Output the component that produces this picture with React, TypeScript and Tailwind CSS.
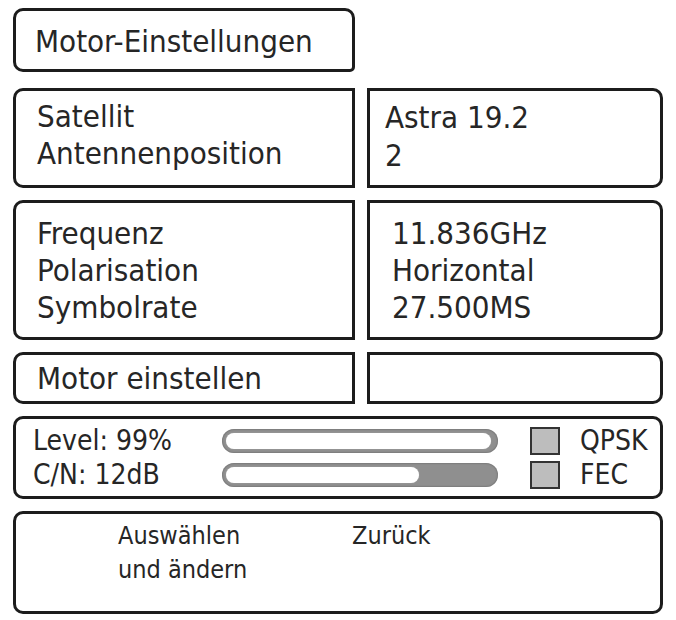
import React from "react";

const font = "font-['DejaVu_Sans_Condensed','DejaVu_Sans',sans-serif] font-stretch-semi-condensed";

const signal = [
  { label: "Level: 99%", value: 99, flag: "QPSK" },
  { label: "C/N: 12dB", value: 72, flag: "FEC" },
];

function Bar({ value }: { value: number }) {
  return (
    <div className="h-[24px] w-[276px] rounded-full bg-[#8f8f8f] p-[4px] shadow-[inset_0_0_2px_#555]">
      <div
        className="h-full rounded-full bg-white shadow-[0_0_1px_#bbb]"
        style={{ width: `${value}%` }}
      />
    </div>
  );
}

export default function App() {
  return (
    <div className={`min-h-[620px] w-[676px] bg-white text-[#262626] ${font}`}>
      <div className="flex flex-col gap-[12px] px-[13px] pt-[8px]">
        <div className="mb-[4px] flex h-[64px] w-[342px] items-center rounded-[10px] rounded-br-[5px] border-[3px] border-[#1c1c1c] pl-[19px] pt-[3px] text-[31px]">
          Motor-Einstellungen
        </div>

        <div className="flex gap-[12px]">
          <div className="h-[100px] w-[342px] rounded-l-[10px] border-[3px] border-[#1c1c1c] pl-[21px] pt-[7px] text-[31px] leading-[37px]">
            <div>Satellit</div>
            <div>Antennenposition</div>
          </div>
          <div className="h-[100px] flex-1 rounded-r-[10px] border-[3px] border-[#1c1c1c] pl-[15px] pt-[7px] text-[31px] leading-[38px]">
            <div>Astra 19.2</div>
            <div>2</div>
          </div>
        </div>

        <div className="flex gap-[12px]">
          <div className="h-[140px] w-[342px] rounded-l-[10px] border-[3px] border-[#1c1c1c] pl-[21px] pt-[12px] text-[31px] leading-[37px]">
            <div>Frequenz</div>
            <div>Polarisation</div>
            <div>Symbolrate</div>
          </div>
          <div className="h-[140px] flex-1 rounded-r-[10px] border-[3px] border-[#1c1c1c] pl-[22px] pt-[12px] text-[31px] leading-[37px]">
            <div>11.836GHz</div>
            <div>Horizontal</div>
            <div>27.500MS</div>
          </div>
        </div>

        <div className="flex gap-[12px]">
          <div className="flex h-[52px] w-[342px] items-center rounded-l-[10px] border-[3px] border-[#1c1c1c] pl-[21px] text-[31px]">
            Motor einstellen
          </div>
          <div className="h-[52px] flex-1 rounded-r-[10px] border-[3px] border-[#1c1c1c]" />
        </div>

        <div className="flex h-[83px] flex-col justify-center rounded-[10px] border-[3px] border-[#1c1c1c] pl-[17px] text-[28px]">
          {signal.map((s) => (
            <div key={s.flag} className="flex h-[34px] items-center">
              <div className="w-[189px]">{s.label}</div>
              <Bar value={s.value} />
              <div className="ml-[32px] h-[28px] w-[30px] border-2 border-[#333] bg-[#bdbdbd]" />
              <div className="ml-[20px]">{s.flag}</div>
            </div>
          ))}
        </div>

        <div className="flex h-[103px] rounded-[10px] border-[3px] border-[#1c1c1c] pl-[102px] pt-[5px] text-[25px] leading-[34px]">
          <div className="w-[234px]">
            <div>Auswählen</div>
            <div>und ändern</div>
          </div>
          <div>Zurück</div>
        </div>
      </div>
    </div>
  );
}
